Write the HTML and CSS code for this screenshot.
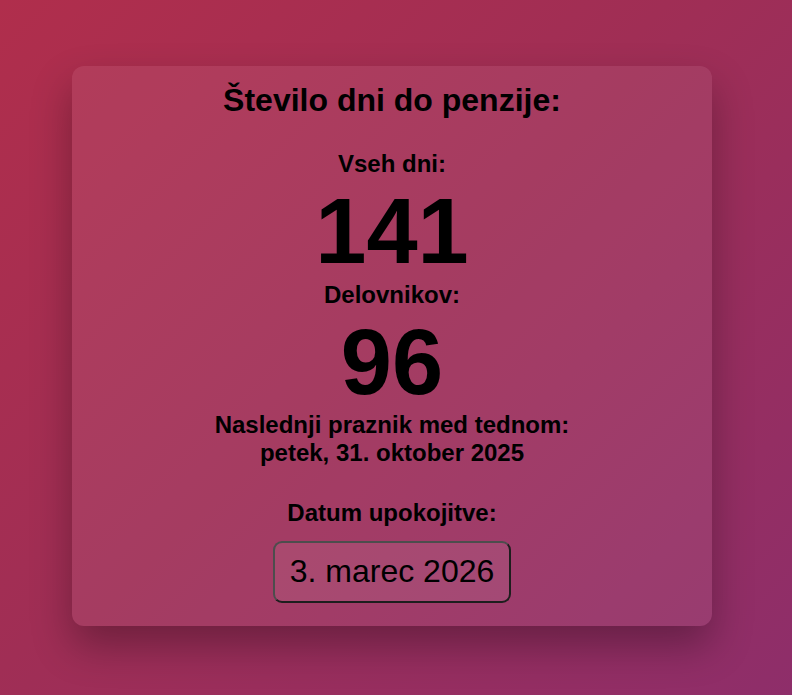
FILE: index.html
```html
<!DOCTYPE html>
<html lang="sl">
<head>
<meta charset="utf-8">
<title>Število dni do penzije</title>
<link rel="stylesheet" href="styles.css">
</head>
<body>
<main class="card">
  <h1 class="title">Število dni do penzije:</h1>
  <div class="label label-first">Vseh dni:</div>
  <div class="big">141</div>
  <div class="label label-mid">Delovnikov:</div>
  <div class="big">96</div>
  <div class="holiday">Naslednji praznik med tednom:<br>petek, 31. oktober 2025</div>
  <div class="label date-label">Datum upokojitve:</div>
  <div class="date-box">3. marec 2026</div>
</main>
</body>
</html>
```
FILE: styles.css
```css
html, body {
  margin: 0;
  padding: 0;
  height: 100%;
}
body {
  background: linear-gradient(135deg, #b02e4c 0%, #a02e55 45%, #8e2e6a 100%);
  font-family: "Liberation Sans", Arial, sans-serif;
  color: #000;
  display: flex;
  justify-content: center;
  align-items: flex-start;
  overflow: hidden;
}
.card {
  box-sizing: border-box;
  margin: 66px 0 0 -8px;
  width: 640px;
  height: 560px;
  padding: 16px 20px 20px;
  border-radius: 12px;
  background: rgba(255, 255, 255, 0.07);
  box-shadow: 0 20px 40px rgba(0, 0, 0, 0.3);
  display: flex;
  flex-direction: column;
  align-items: center;
  text-align: center;
}
.title {
  margin: 0;
  font-size: 32px;
  line-height: 37px;
  font-weight: bold;
}
.label {
  font-size: 24px;
  line-height: 28px;
  font-weight: bold;
}
.label-first {
  margin-top: 31px;
}
.label-mid {
  margin-top: 4px;
}
.big {
  margin-top: 7px;
  font-size: 92px;
  line-height: 92px;
  font-weight: bold;
}
.holiday {
  margin-top: 3px;
  font-size: 24px;
  line-height: 28px;
  font-weight: bold;
}
.date-label {
  margin-top: 32px;
}
.date-box {
  margin-top: 14px;
  box-sizing: border-box;
  width: 238px;
  height: 62px;
  border: 2px solid #4d4d4d;
  border-right-color: #1e1e1e;
  border-bottom-color: #1e1e1e;
  border-radius: 9px;
  background: rgba(255, 255, 255, 0.07);
  font-size: 32px;
  line-height: 56px;
}
```
